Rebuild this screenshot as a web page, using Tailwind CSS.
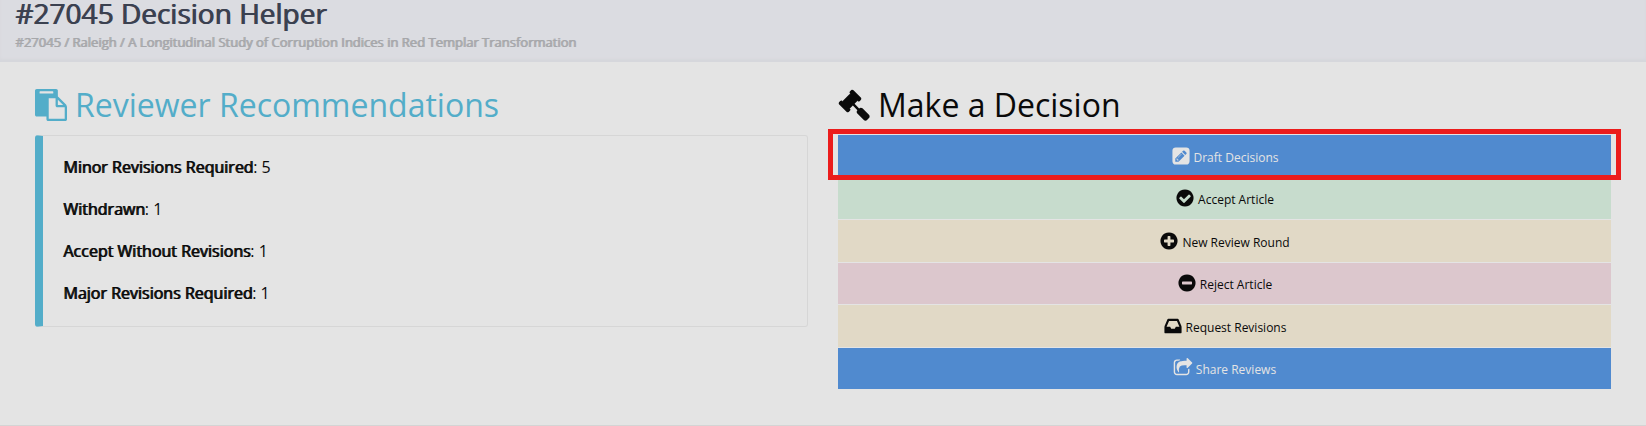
<!DOCTYPE html>
<html lang="en">
<head>
  <meta charset="UTF-8">
  <meta name="viewport" content="width=device-width, initial-scale=1.0">
  <title>#27045 Decision Helper</title>
  <script src="https://cdn.jsdelivr.net/npm/@tailwindcss/browser@4"></script>
</head>
<body class="bg-[#e4e4e4] text-[#0a0a0a] font-['Open_Sans',sans-serif]">

<!-- Page header -->
<header class="bg-[#dbdce1] px-[15px] pb-2 shadow-[inset_0_-3px_3px_#d6d7dc]">
  <h1 class="text-[28px] leading-[26px] text-[#3b4150] [text-shadow:1px_0_0_#3b4150]">#27045 Decision Helper</h1>
  <p class="pt-1 text-[13px] leading-6 text-[#a6a7aa] [text-shadow:1px_0_0_#a6a7aa]">#27045 / Raleigh / A Longitudinal Study of Corruption Indices in Red Templar Transformation</p>
</header>

<main class="grid grid-cols-2 gap-[30px] border-b border-[#d4d4d4] px-[35px] pt-[21px] pb-9">

  <!-- Reviewer recommendations -->
  <section>
    <h2 class="mb-2 flex items-center gap-2 text-[32px] leading-[44px] text-[#53adc9]">
      <svg class="size-8" viewBox="0 0 1792 1792" fill="currentColor" aria-hidden="true"><path d="M768 1664h896v-640h-416q-40 0-68-28t-28-68v-416h-384v1152zm256-1440v-64q0-13-9.5-22.5t-22.5-9.5h-704q-13 0-22.5 9.5t-9.5 22.5v64q0 13 9.5 22.5t22.5 9.5h704q13 0 22.5-9.5t9.5-22.5zm256 672h299l-299-299v299zm512 128v672q0 40-28 68t-68 28h-960q-40 0-68-28t-28-68v-160h-544q-40 0-68-28t-28-68v-1344q0-40 28-68t68-28h1088q40 0 68 28t28 68v328q21 13 36 28l408 408q28 28 48 76t20 88z"/></svg>
      Reviewer Recommendations
    </h2>
    <div class="space-y-4 rounded-[3px] border border-l-8 border-[#d6d6d6] border-l-[#53adc9] px-5 pt-[18px] pb-5 text-[16px] leading-[26px]">
      <p><span class="[text-shadow:1px_0_0_#0a0a0a]">Minor Revisions Required</span>: 5</p>
      <p><span class="[text-shadow:1px_0_0_#0a0a0a]">Withdrawn</span>: 1</p>
      <p><span class="[text-shadow:1px_0_0_#0a0a0a]">Accept Without Revisions</span>: 1</p>
      <p><span class="[text-shadow:1px_0_0_#0a0a0a]">Major Revisions Required</span>: 1</p>
    </div>
  </section>

  <!-- Decision buttons -->
  <section>
    <h2 class="mb-2 flex items-center gap-2 text-[32px] leading-[44px]">
      <svg class="size-8" viewBox="0 0 1792 1792" fill="currentColor" aria-hidden="true"><path d="M1771 1536q0 53-37 90l-107 108q-39 37-91 37-53 0-90-37l-363-364q-38-36-38-90 0-53 43-96l-256-256-126 126q-14 14-34 14t-34-14q2 2 12.5 12t12.5 13 10 11.5 10 13.5 6 13.5 5.5 16.5 1.5 18q0 38-28 68-3 3-16.5 18t-19 20.5-18.5 16.5-22 15.5-22 9-26 4.5q-40 0-68-28l-408-408q-28-28-28-68 0-13 4.5-26t9-22 15.5-22 16.5-18.5 20.5-19 18-16.5q30-28 68-28 10 0 18 1.5t16.5 5.5 13.5 6 13.5 10 11.5 10 13 12.5 12 12.5q-14-14-14-34t14-34l348-348q14-14 34-14t34 14q-2-2-12.5-12t-12.5-13-10-11.5-10-13.5-6-13.5-5.5-16.5-1.5-18q0-38 28-68 3-3 16.5-18t19-20.5 18.5-16.5 22-15.5 22-9 26-4.5q40 0 68 28l408 408q28 28 28 68 0 13-4.5 26t-9 22-15.5 22-16.5 18.5-20.5 19-18 16.5q-30 28-68 28-10 0-18-1.5t-16.5-5.5-13.5-6-13.5-10-11.5-10-13-12.5-12-12.5q14 14 14 34t-14 34l-126 126 256 256q43-43 96-43 52 0 91 37l363 363q37 39 37 91z"/></svg>
      Make a Decision
    </h2>
    <div class="relative grid min-h-[254px] grid-rows-6 gap-px text-xs">
      <button type="button" class="flex items-center justify-center gap-[3px] bg-[#508acf] text-[#e4e4e4]">
        <svg class="size-5" viewBox="-128 0 1792 1792" fill="currentColor" aria-hidden="true"><path d="M404 1108l152 152-52 52h-56v-96h-96v-56zm414-390q14 13-3 30l-291 291q-17 17-30 3-14-13 3-30l291-291q17-17 30-3zm-274 690l544-544-288-288-544 544v288h288zm608-608l92-92q28-28 28-68t-28-68l-152-152q-28-28-68-28t-68 28l-92 92zm384-384v960q0 119-84.5 203.5t-203.5 84.5h-960q-119 0-203.5-84.5t-84.5-203.5v-960q0-119 84.5-203.5t203.5-84.5h960q119 0 203.5 84.5t84.5 203.5z"/></svg>
        <span class="pt-1">Draft Decisions</span>
      </button>
      <button type="button" class="flex items-center justify-center gap-[3px] bg-[#c7dccd]">
        <svg class="size-5" viewBox="0 0 1792 1792" fill="currentColor" aria-hidden="true"><path d="M1412 734q0-28-18-46l-91-90q-19-19-45-19t-45 19l-408 407-226-226q-19-19-45-19t-45 19l-91 90q-18 18-18 46 0 27 18 45l362 362q19 19 45 19 27 0 46-19l543-543q18-18 18-45zm252 162q0 209-103 385.5t-279.5 279.5-385.5 103-385.5-103-279.5-279.5-103-385.5 103-385.5 279.5-279.5 385.5-103 385.5 103 279.5 279.5 103 385.5z"/></svg>
        <span class="pt-1">Accept Article</span>
      </button>
      <button type="button" class="flex items-center justify-center gap-[3px] bg-[#e1d9c6]">
        <svg class="size-5" viewBox="0 0 1792 1792" fill="currentColor" aria-hidden="true"><path d="M1344 960v-128q0-26-19-45t-45-19h-256v-256q0-26-19-45t-45-19h-128q-26 0-45 19t-19 45v256h-256q-26 0-45 19t-19 45v128q0 26 19 45t45 19h256v256q0 26 19 45t45 19h128q26 0 45-19t19-45v-256h256q26 0 45-19t19-45zm320-64q0 209-103 385.5t-279.5 279.5-385.5 103-385.5-103-279.5-279.5-103-385.5 103-385.5 279.5-279.5 385.5-103 385.5 103 279.5 279.5 103 385.5z"/></svg>
        <span class="pt-1">New Review Round</span>
      </button>
      <button type="button" class="flex items-center justify-center gap-[3px] bg-[#dcc7cd]">
        <svg class="size-5" viewBox="0 0 1792 1792" fill="currentColor" aria-hidden="true"><path d="M1344 960v-128q0-26-19-45t-45-19h-768q-26 0-45 19t-19 45v128q0 26 19 45t45 19h768q26 0 45-19t19-45zm320-64q0 209-103 385.5t-279.5 279.5-385.5 103-385.5-103-279.5-279.5-103-385.5 103-385.5 279.5-279.5 385.5-103 385.5 103 279.5 279.5 103 385.5z"/></svg>
        <span class="pt-1">Reject Article</span>
      </button>
      <button type="button" class="flex items-center justify-center gap-[3px] bg-[#e1d9c6]">
        <svg class="size-5" viewBox="0 0 1792 1792" fill="currentColor" aria-hidden="true"><path d="M1151 960h316q-1-3-2.5-8t-2.5-8l-212-496h-708l-212 496q-1 2-2.5 8t-2.5 8h316l95 192h320zm513 30v482q0 26-19 45t-45 19h-1408q-26 0-45-19t-19-45v-482q0-62 25-123l238-552q10-25 36.5-42t52.5-17h832q26 0 52.5 17t36.5 42l238 552q25 61 25 123z"/></svg>
        <span class="pt-1">Request Revisions</span>
      </button>
      <button type="button" class="flex items-center justify-center gap-[3px] bg-[#508acf] text-[#e4e4e4]">
        <svg class="size-5" viewBox="0 0 1792 1792" fill="currentColor" aria-hidden="true"><path d="M1472 989v259q0 119-84.5 203.5t-203.5 84.5h-832q-119 0-203.5-84.5t-84.5-203.5v-832q0-119 84.5-203.5t203.5-84.5h255q13 0 22.5 9.5t9.5 22.5q0 27-26 32-77 26-133 60-10 4-16 4h-112q-66 0-113 47t-47 113v832q0 66 47 113t113 47h832q66 0 113-47t47-113v-214q0-19 18-29 28-13 54-37 16-16 35-8 21 9 21 31zm237-496l-384 384q-18 19-45 19-12 0-25-5-39-17-39-59v-192h-160q-323 0-438 131-119 137-74 473 3 23-20 34-8 2-12 2-16 0-26-13-10-14-21-31t-39.5-68.5-49.5-99.5-38.5-114-17.5-122q0-49 3.5-91t14-90 28-88 47-81.5 68.5-74 94.5-61.5 124.5-48.5 159.5-30.5 196.5-11h160v-192q0-42 39-59 13-5 25-5 26 0 45 19l384 384q19 19 19 45t-19 45z"/></svg>
        <span class="pt-1">Share Reviews</span>
      </button>
      <!-- Highlight around the draft button -->
      <div class="pointer-events-none absolute -inset-x-[10px] -top-[6px] h-[51px] border-[5px] border-[#eb1c1c]"></div>
    </div>
  </section>

</main>

</body>
</html>
